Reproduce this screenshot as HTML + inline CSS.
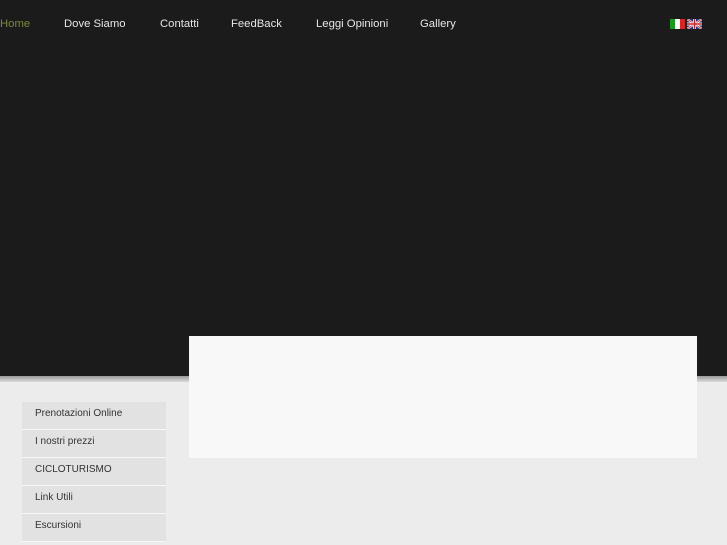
<!DOCTYPE html>
<html><head><style>
body{margin:0;width:727px;height:545px;overflow:hidden;background:#ececec;font-family:"Liberation Sans",sans-serif;position:relative}
#top{position:absolute;left:0;top:0;width:727px;height:376px;background:#1b1b1b}
#band{position:absolute;left:0;top:376px;width:727px;height:6px;background:linear-gradient(#9a9a9a,#dcdcdc)}
nav a{position:absolute;top:18px;color:#e6e6e6;font-size:11.3px;text-decoration:none}
#box{position:absolute;left:189px;top:336px;width:508px;height:122px;background:#f8f8f8}
.m{position:absolute;left:22px;width:144px;height:27px;background:#e2e2e2;border-bottom:1px solid #f8f8f8;font-size:10px;color:#333;line-height:23px;text-indent:13px}
</style></head><body>
<div id="top"></div><div id="band"></div>
<nav>
<a style="left:0;color:#7a8a3a">Home</a>
<a style="left:64px">Dove Siamo</a>
<a style="left:160px">Contatti</a>
<a style="left:231px">FeedBack</a>
<a style="left:316px">Leggi Opinioni</a>
<a style="left:420px">Gallery</a>
</nav>
<div style="position:absolute;left:670px;top:19px;width:15px;height:10px;background:linear-gradient(90deg,#1a9a1a 33%,#fff 33% 66%,#d22 66%)"></div>
<svg style="position:absolute;left:687px;top:19px" width="15" height="10" viewBox="0 0 15 10"><rect width="15" height="10" fill="#1c3a8a"/><path d="M0 0L15 10M15 0L0 10" stroke="#fff" stroke-width="2"/><path d="M0 0L15 10M15 0L0 10" stroke="#c22" stroke-width="0.8"/><path d="M7.5 0V10M0 5H15" stroke="#fff" stroke-width="3"/><path d="M7.5 0V10M0 5H15" stroke="#c22" stroke-width="1.6"/></svg>
<div id="box"></div>
<div class="m" style="top:402px">Prenotazioni Online</div>
<div class="m" style="top:430px">I nostri prezzi</div>
<div class="m" style="top:458px">CICLOTURISMO</div>
<div class="m" style="top:486px">Link Utili</div>
<div class="m" style="top:514px">Escursioni</div>
</body></html>
